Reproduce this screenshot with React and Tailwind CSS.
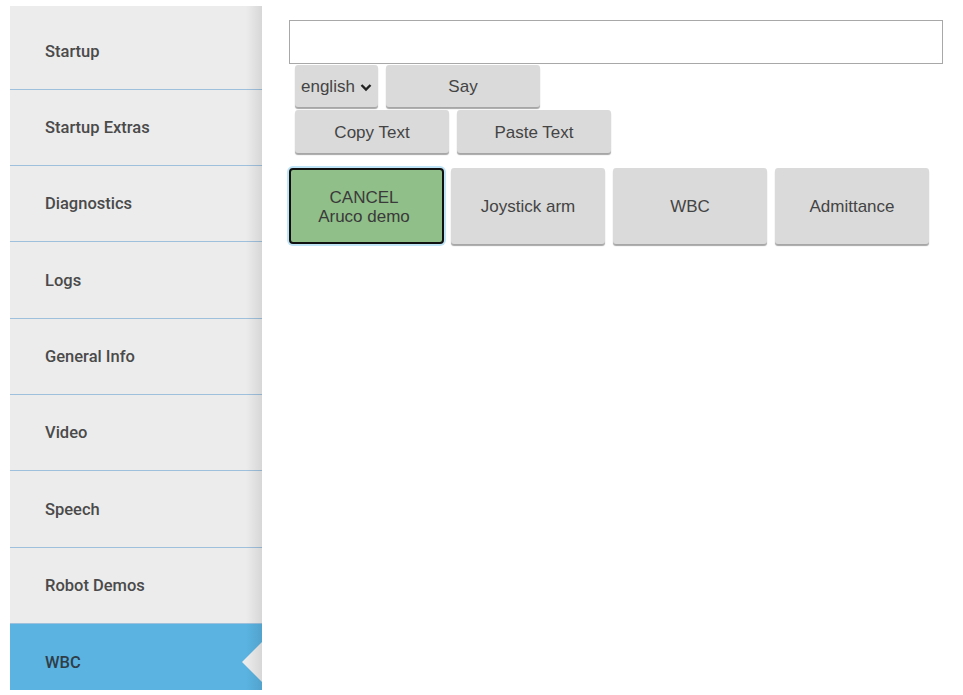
import React from "react";

const items = [
  ["Startup", 77],
  ["Startup Extras", 76],
  ["Diagnostics", 76],
  ["Logs", 77],
  ["General Info", 76],
  ["Video", 76],
  ["Speech", 77],
  ["Robot Demos", 76],
  ["WBC", 77],
];

function SideItem({ label, h, active }) {
  return (
    <div
      style={{ height: h }}
      className={
        "relative flex shrink-0 items-center border-b border-[#9fc0dc] pl-[35px] pt-[2px] text-[16.5px] font-medium " +
        (active ? "bg-[#5ab3e1] text-[#2f3d48]" : "text-[#4a4a4a]")
      }
    >
      {label}
      {active && (
        <div className="absolute right-0 top-1/2 h-0 w-0 -translate-y-1/2 border-y-[20px] border-r-[20px] border-y-transparent border-r-[#ececec]" />
      )}
    </div>
  );
}

function Btn({ children, className = "" }) {
  return (
    <div
      className={
        "flex items-center justify-center rounded-[3px] bg-[#dadada] pt-[2px] text-[17px] text-[#444] shadow-[0_2px_1px_rgba(0,0,0,0.35)] " +
        className
      }
    >
      {children}
    </div>
  );
}

export default function App() {
  return (
    <div
      className="flex h-[695px] w-[963px] overflow-hidden bg-white"
      style={{ fontFamily: "'Liberation Sans', Arial, sans-serif" }}
    >
      <div
        className="relative ml-[10px] mt-[6px] flex h-[684px] w-[252px] shrink-0 flex-col overflow-hidden bg-[#ececec] pt-[7px]"
        style={{ fontFamily: "Roboto, 'Liberation Sans', sans-serif" }}
      >
        {items.map(([it, h]) => (
          <SideItem key={it} label={it} h={h} active={it === "WBC"} />
        ))}
        <div className="pointer-events-none absolute right-0 top-0 h-full w-[16px] bg-gradient-to-r from-transparent to-[rgba(0,0,0,0.09)]" />
      </div>
      <div className="flex flex-col pl-[27px] pt-[20px]">
        <div className="h-[44px] w-[654px] border border-[#a8a8a8] bg-white" />
        <div className="mt-[1px] flex gap-[8px] pl-[6px]">
          <Btn className="h-[42px] w-[83px] justify-start gap-[5px] pl-[6px]">
            <span>english</span>
            <svg width="12" height="9" viewBox="0 0 12 9">
              <path d="M1.5 2 L6 6.5 L10.5 2" fill="none" stroke="#222" strokeWidth="2.4" />
            </svg>
          </Btn>
          <Btn className="h-[42px] w-[154px]">Say</Btn>
        </div>
        <div className="mt-[3px] flex gap-[8px] pl-[6px]">
          <Btn className="h-[43px] w-[154px]">Copy Text</Btn>
          <Btn className="h-[43px] w-[154px]">Paste Text</Btn>
        </div>
        <div className="mt-[15px] flex gap-[7px]">
          <div className="flex h-[76px] w-[155px] flex-col items-center justify-center rounded-[4px] border-2 border-[#111] bg-[#90bf89] pr-[5px] pt-[2px] text-[17px] leading-[19px] text-[#3a3a3a] shadow-[0_0_0_2px_#bfe3f7]">
            <span>CANCEL</span>
            <span>Aruco demo</span>
          </div>
          <Btn className="h-[76px] w-[154px]">Joystick arm</Btn>
          <Btn className="ml-[1px] h-[76px] w-[154px]">WBC</Btn>
          <Btn className="ml-[1px] h-[76px] w-[154px]">Admittance</Btn>
        </div>
      </div>
    </div>
  );
}
